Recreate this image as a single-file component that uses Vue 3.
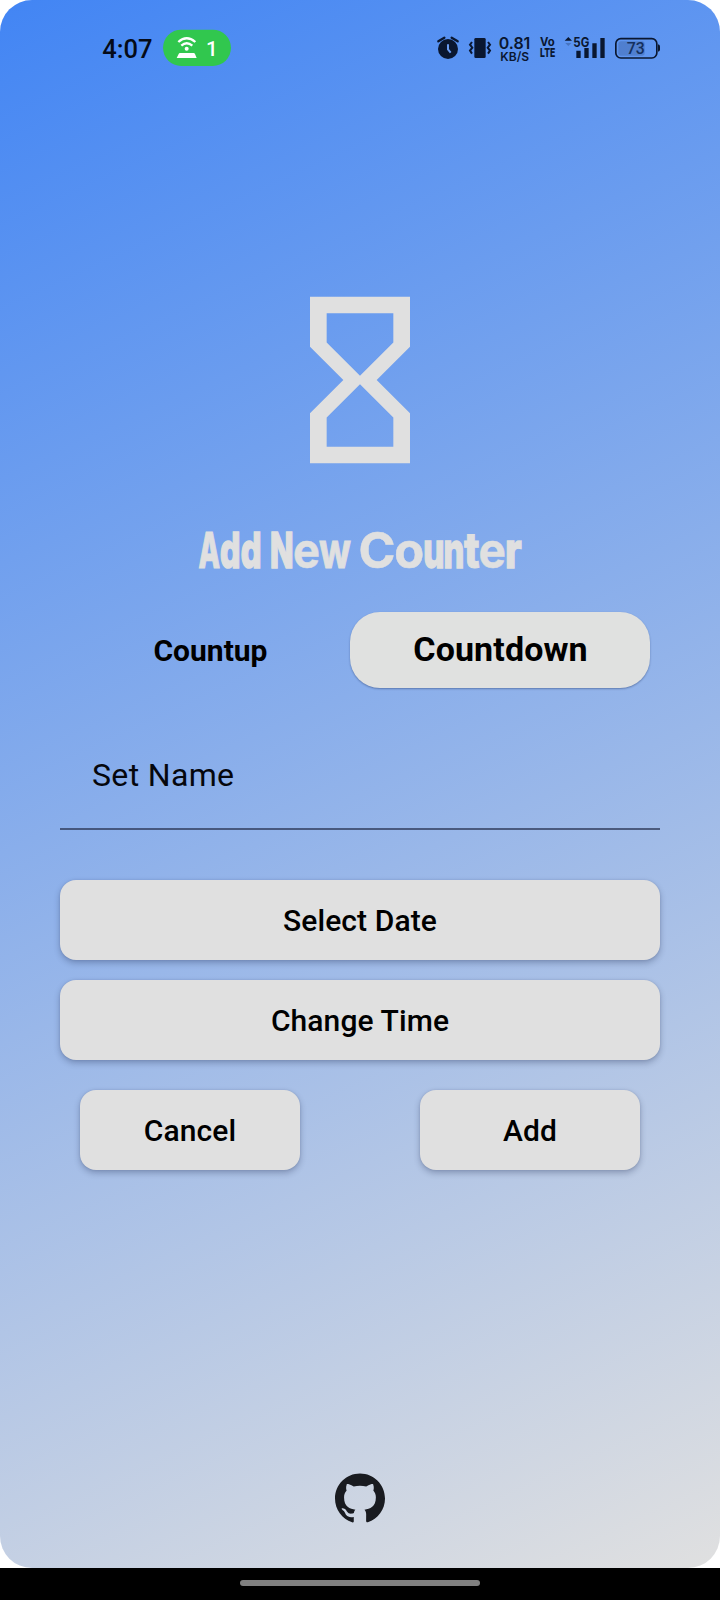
<script setup>
import { ref } from 'vue'

const name = ref('')
const mode = ref('Countdown')

// Display lettering: each glyph has its own width [char, x, advance, stroke, weight]
const letters = [
  ['A', 0.5, 21.5, 1.2, 800], ['d', 22, 20.4, 1.7, 800], ['d', 42.7, 20.8, 1.7, 800],
  ['N', 72, 23.5, 1.7, 800], ['e', 95, 27, 0.5, 700], ['w', 121, 32, 1, 700],
  ['C', 160.5, 37, 0.5, 700], ['o', 196.3, 30, 0.5, 700], ['u', 225.3, 21.2, 1.6, 800], ['n', 245.5, 20.8, 1.6, 800],
  ['t', 265.9, 15.6, 1, 800], ['e', 280.6, 27.4, 0.5, 700], ['r', 307, 16.7, 1.3, 800],
]
</script>

<template>
  <div class="device">
    <main class="screen">
      <header class="status">
        <svg class="status-left" viewBox="0 0 540 180" width="180" height="60">
          <text x="67" y="114" font-size="76" font-weight="500" textLength="151" lengthAdjust="spacingAndGlyphs" font-family="Roboto, sans-serif" fill="#050b18">4:07</text>
          <rect x="249" y="29" width="204" height="109" rx="54.500" fill="#31c74e" />
          <g fill="none" stroke="#fff" stroke-width="7">
            <path d="M295 66Q320 43 346 66" />
            <path d="M304 77Q320 63 337 77" />
          </g>
          <circle cx="320" cy="86" r="6" fill="#fff" />
          <path d="M300 99h41q3 0 4 3l5 12h-60l6-12q1-3 4-3Z" fill="#fff" />
          <text x="378" y="109" font-size="62" font-weight="500" font-family="Roboto, sans-serif" fill="#fff">1</text>
        </svg>
        <svg class="status-right" viewBox="0 0 780 180" width="260" height="60" fill="#0a1730">
          <circle cx="84" cy="87" r="30" />
          <path d="M55 64l18-11M95 53l18 11" stroke="#0a1730" stroke-width="7" stroke-linecap="round" />
          <path d="M84 73v15l8 10" fill="none" stroke="#6a9cf2" stroke-width="6" />
          <rect x="163" y="54" width="34" height="60" rx="4" />
          <path d="M156 66l-6 8 7 9-7 9 6 9M204 66l6 8-7 9 7 9-6 9" fill="none" stroke="#0a1730" stroke-width="6" />
          <g font-family="Inter, sans-serif" font-weight="600">
            <text x="236" y="87" font-size="48" textLength="95" lengthAdjust="spacingAndGlyphs">0.81</text>
            <text x="241" y="122" font-size="37" textLength="86" lengthAdjust="spacingAndGlyphs">KB/S</text>
            <text x="360" y="78" font-size="34" font-weight="700" textLength="44" lengthAdjust="spacingAndGlyphs">Vo</text>
            <text x="360" y="112" font-size="37" font-weight="800" textLength="46" lengthAdjust="spacingAndGlyphs">LTE</text>
            <text x="460" y="81" font-size="38" font-weight="700" textLength="48" lengthAdjust="spacingAndGlyphs">5G</text>
          </g>
          <path d="M434 62l11-11 11 11Z" />
          <path d="M436 69h18l-9 9Z" opacity=".25" />
          <path d="M469 92h13v22h-13ZM493 84h13v30h-13ZM517 70h13v44h-13ZM541 54h13v60h-13Z" />
          <rect x="595" y="64" width="79" height="43" rx="8" opacity=".17" />
          <rect x="587.500" y="56" width="123" height="58" rx="15" fill="none" stroke="#0a1730" stroke-width="5" />
          <text x="620" y="102" font-size="47" font-family="Roboto, sans-serif" font-weight="500" fill="#14305e" textLength="54" lengthAdjust="spacingAndGlyphs">73</text>
          <path d="M714 73q6 1 6 6v10q0 5-6 6Z" />
        </svg>
      </header>

      <svg class="hourglass" viewBox="0 0 24 24" fill="#e0e0e0">
        <path d="M6 2v6h.01L6 8.010 10 12l-4 4 .01.01H6V22h12v-5.990h-.01L18 16l-4-4 4-3.990-.01-.01H18V2H6zm10 14.500V20H8v-3.500l4-4 4 4zm-4-5l-4-4V4h8v3.500l-4 4z" />
      </svg>

      <h1 class="title">
        <svg width="332" height="72" viewBox="-4 -8 332 72" fill="#e0e0e0" stroke="#e0e0e0" aria-label="Add New Counter">
          <text
            v-for="([c, x, w, s, b], i) in letters" :key="i"
            :x="x" y="44" :textLength="w" :stroke-width="s" :font-weight="b" lengthAdjust="spacingAndGlyphs"
          >{{ c }}</text>
        </svg>
      </h1>

      <div class="tabs">
        <button v-for="t in ['Countup', 'Countdown']" :key="t" class="tab" :class="{ active: mode === t }" @click="mode = t">{{ t }}</button>
      </div>

      <input v-model="name" class="name" placeholder="Set Name">

      <div class="pickers">
        <button class="btn">Select Date</button>
        <button class="btn">Change Time</button>
      </div>
      <div class="actions">
        <button class="btn">Cancel</button>
        <button class="btn">Add</button>
      </div>

      <svg class="github" viewBox="0 0 24 24" fill="#191b20">
        <path d="M12 .297c-6.630 0-12 5.373-12 12 0 5.303 3.438 9.800 8.205 11.385.6.113.82-.258.82-.577 0-.285-.01-1.040-.015-2.040-3.338.724-4.042-1.610-4.042-1.610C4.422 18.070 3.633 17.700 3.633 17.700c-1.087-.744.084-.729.084-.729 1.205.084 1.838 1.236 1.838 1.236 1.070 1.835 2.809 1.305 3.495.998.108-.776.417-1.305.76-1.605-2.665-.3-5.466-1.332-5.466-5.930 0-1.310.465-2.380 1.235-3.220-.135-.303-.54-1.523.105-3.176 0 0 1.005-.322 3.300 1.230.96-.267 1.980-.399 3-.405 1.020.006 2.040.138 3 .405 2.280-1.552 3.285-1.230 3.285-1.230.645 1.653.24 2.873.12 3.176.765.84 1.230 1.910 1.230 3.220 0 4.610-2.805 5.625-5.475 5.920.42.36.81 1.096.81 2.220 0 1.606-.015 2.896-.015 3.286 0 .315.21.69.825.57C20.565 22.092 24 17.592 24 12.297c0-6.627-5.373-12-12-12" />
      </svg>
    </main>
    <footer class="nav"><span class="handle"></span></footer>
  </div>
</template>

<style>
body { margin: 0; background: #fff; }
</style>

<style scoped>
.device {
  width: 720px;
  height: 1600px;
  overflow: hidden;
  background: #fff;
  font-family: Roboto, sans-serif;
}
.screen {
  box-sizing: border-box;
  height: 1568px;
  display: flex;
  flex-direction: column;
  align-items: center;
  border-radius: 32px;
  background: linear-gradient(155.34deg, #4285f4, #e0e0e0);
}
.status {
  box-sizing: border-box;
  width: 100%;
  height: 80px;
  padding: 20px 40px 0 80px;
  display: flex;
  justify-content: space-between;
}
.hourglass { width: 200px; height: 200px; margin-top: 199.500px; flex: none; }
.title { margin: 36.500px 0 0; height: 72px; font: 800 49.5px Inter, sans-serif; }
.title svg { display: block; overflow: visible; }
.tabs { display: flex; width: 580px; height: 76px; margin-top: 24px; }
button { border: 0; padding: 0; font-family: inherit; color: #000; }
.tab {
  width: 280px;
  padding-left: 1px;
  background: none;
  font-size: 30px;
  font-weight: 700;
  border-radius: 30px;
}
.tab.active {
  width: 300px;
  background: #e0e1e0;
  font-size: 34px;
  letter-spacing: .1px;
  padding-bottom: 2px;
  box-shadow: 0 1px 2px rgba(20, 40, 90, .4);
}
.name {
  box-sizing: border-box;
  width: 600px;
  height: 110px;
  margin-top: 32px;
  padding: 2px 32px 0;
  border: 0;
  border-bottom: 2px solid rgba(40, 50, 80, .7);
  background: none;
  outline: none;
  font: 400 32px Roboto, sans-serif;
  letter-spacing: .35px;
}
.name, .name::placeholder { color: #05070d; opacity: 1; }
.btn {
  height: 80px;
  border-radius: 16px;
  background: #e0e0e0;
  font-size: 30px;
  font-weight: 500;
  letter-spacing: .1px;
  box-shadow: 0 3px 6px rgba(30, 45, 80, .32), 0 0 2px rgba(30, 45, 80, .16);
}
.pickers { width: 600px; margin-top: 50px; display: flex; flex-direction: column; gap: 20px; }
.actions { width: 560px; margin-top: 30px; display: flex; justify-content: space-between; }
.actions .btn { width: 220px; }
.github { width: 50px; height: 50px; margin-top: auto; margin-bottom: 45.500px; }
.nav { height: 32px; background: #000; display: flex; justify-content: center; align-items: flex-start; }
.handle { width: 240px; height: 6px; margin-top: 12px; border-radius: 3px; background: #808080; }
</style>
